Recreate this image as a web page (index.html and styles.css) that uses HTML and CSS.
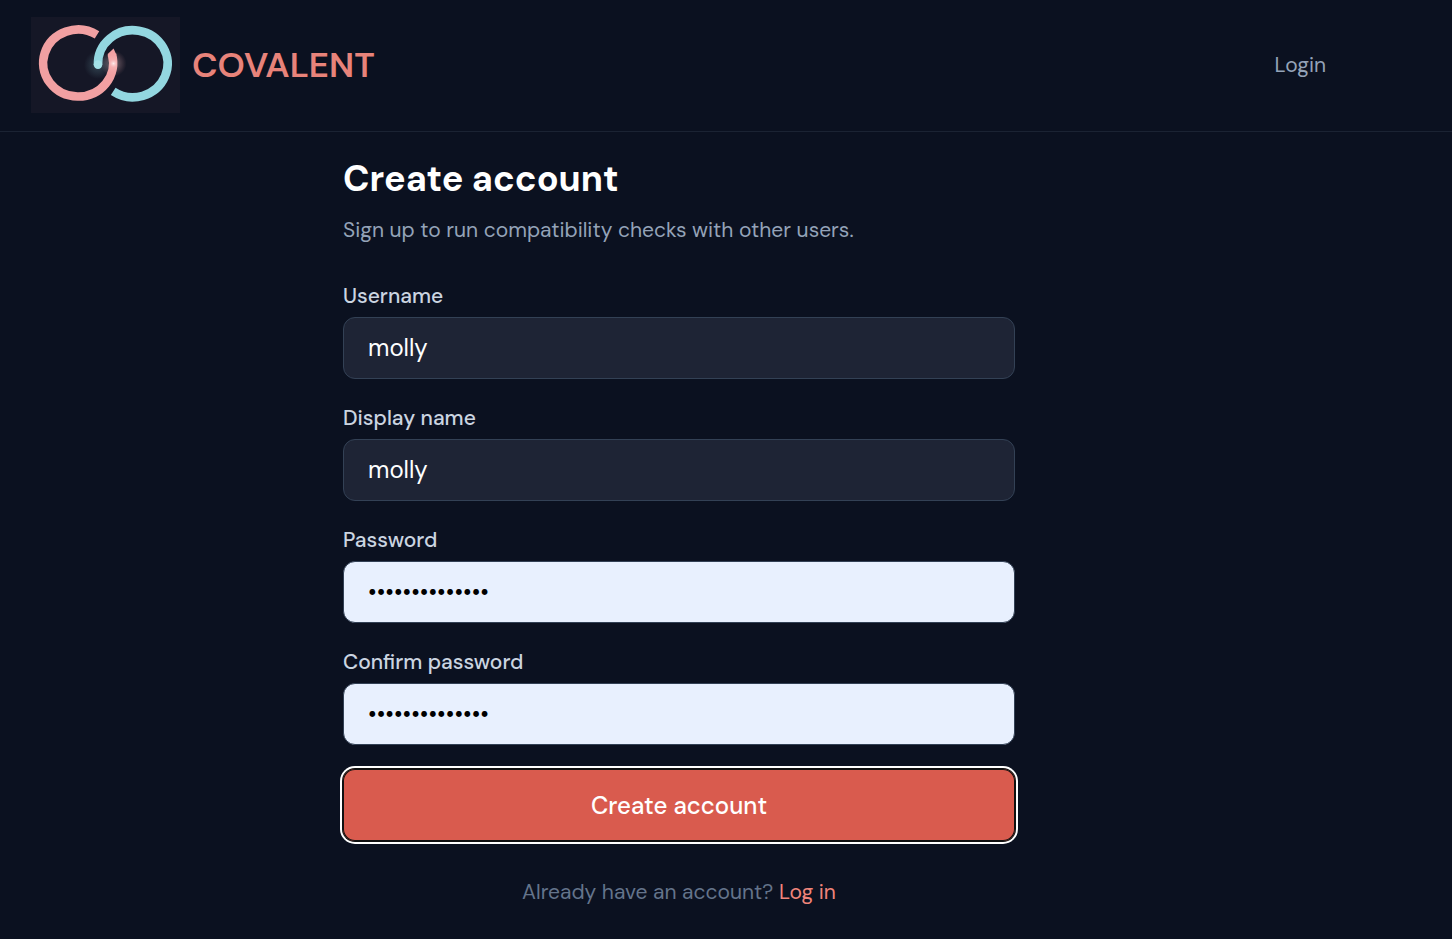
FILE: index.html
```html
<!DOCTYPE html>
<html lang="en">

<head>
    <meta charset="UTF-8">
    <meta name="viewport" content="width=device-width, initial-scale=1.0">
    <title>Covalent - Create account</title>
    <link rel="stylesheet" href="styles.css">
</head>

<body>
    <header class="header">
        <a class="brand" href="#">
            <svg class="logo" viewBox="0 0 149 96" aria-hidden="true">
                <defs>
                    <radialGradient id="glow">
                        <stop offset="0" stop-color="#fff" stop-opacity="0.8" />
                        <stop offset="0.3" stop-color="#ffd5d5" stop-opacity="0.3" />
                        <stop offset="1" stop-color="#f4a3a5" stop-opacity="0" />
                    </radialGradient>
                    <radialGradient id="glow-teal">
                        <stop offset="0" stop-color="#8fd5df" stop-opacity="0.25" />
                        <stop offset="1" stop-color="#8fd5df" stop-opacity="0" />
                    </radialGradient>
                </defs>
                <rect width="149" height="96" fill="#151726" />
                <circle cx="67" cy="48" r="14" fill="url(#glow-teal)" />
                <g fill="none" stroke-width="8.6">
                    <path d="M66 17.8A35 33.5 0 1 0 81 37.5" stroke="#f1a0a2" />
                    <path d="M67 48A34.8 33.5 0 1 1 82.2 74.4" stroke="#93d7e0" />
                </g>
                <circle cx="67" cy="47.6" r="4.3" fill="#a4e2e8" />
                <path d="M76.8 39.5V37L82.6 31.6L85.4 38Z" fill="#f1a0a2" />
                <circle cx="82.5" cy="46.5" r="13" fill="url(#glow)" />
            </svg>
            <span class="brand-name">COVALENT</span>
        </a>
        <nav>
            <a class="nav-link" href="#">Login</a>
        </nav>
    </header>

    <main class="main">
        <section class="signup">
            <h1>Create account</h1>
            <p class="subtitle">Sign up to run compatibility checks with other users.</p>

            <form class="form">
                <div class="field">
                    <label for="username">Username</label>
                    <input type="text" id="username" value="molly">
                </div>
                <div class="field">
                    <label for="display-name">Display name</label>
                    <input type="text" id="display-name" value="molly">
                </div>
                <div class="field">
                    <label for="password">Password</label>
                    <input class="filled" type="password" id="password" value="covalent-bonds">
                </div>
                <div class="field">
                    <label for="confirm-password">Confirm password</label>
                    <input class="filled" type="password" id="confirm-password" value="covalent-bonds">
                </div>
                <button class="submit" type="submit">Create account</button>
            </form>

            <p class="footnote">Already have an account? <a href="#">Log in</a></p>
        </section>
    </main>
</body>

</html>
```

FILE: styles.css
```css
* {
    margin: 0;
    padding: 0;
    box-sizing: border-box;
}

body {
    min-height: 100vh;
    background-color: #0b1120;
    color: #fff;
    font-family: 'DM Sans', Inter, sans-serif;
    font-size: 21px;
    line-height: 30px;
}

a {
    text-decoration: none;
}

.header {
    display: flex;
    align-items: center;
    justify-content: space-between;
    padding: 17px 126px 18px 31px;
    border-bottom: 1px solid #1b2333;
}

.brand {
    display: flex;
    align-items: center;
    gap: 12px;
}

.logo {
    display: block;
    width: 149px;
    height: 96px;
}

.brand-name {
    color: #e8837a;
    font-size: 35px;
    font-weight: 600;
    line-height: 48px;
}

.nav-link {
    color: #94a3b8;
}

.main {
    padding: 24px 94px 24px 0;
}

.signup {
    max-width: 672px;
    margin: 0 auto;
}

h1 {
    font-size: 36px;
    font-weight: 700;
    line-height: 46px;
    margin-bottom: 13px;
}

.subtitle {
    color: #94a3b8;
    margin-bottom: 36px;
}

.form {
    display: flex;
    flex-direction: column;
    gap: 24px;
}

.field {
    display: flex;
    flex-direction: column;
    gap: 6px;
}

label {
    color: #cbd5e1;
    font-weight: 500;
}

input {
    width: 100%;
    height: 62px;
    padding: 0 24px 2px;
    border: 1px solid #334155;
    border-radius: 12px;
    background-color: #1e2435;
    color: #fff;
    font-family: inherit;
    font-size: 24px;
}

.filled {
    background-color: #e8f0fe;
    color: #000;
}

.submit {
    height: 72px;
    border: 0;
    border-radius: 12px;
    background-color: #d95b4e;
    color: #fff;
    font-family: inherit;
    font-size: 24px;
    font-weight: 500;
    box-shadow: inset 0 0 0 1px #101010, 0 0 0 1px #101010, 0 0 0 3px #fff;
}

.footnote {
    margin-top: 36px;
    color: #64748b;
    text-align: center;
}

.footnote a {
    color: #f0857b;
}
```
